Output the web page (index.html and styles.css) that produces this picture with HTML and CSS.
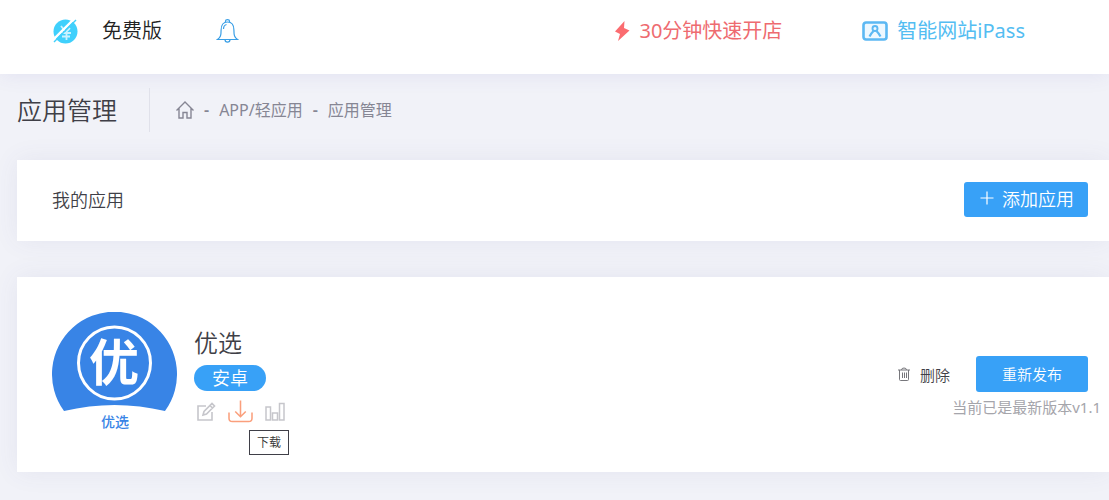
FILE: index.html
```html
<!DOCTYPE html>
<html lang="zh-CN">
<head>
    <meta charset="UTF-8">
    <meta name="viewport" content="width=device-width, initial-scale=1.0">
    <title>应用管理</title>
    <link rel="stylesheet" href="styles.css">
</head>
<body>
    <header class="topbar">
        <a class="plan" href="#">
            <svg class="plan-icon" viewBox="0 0 25 25" aria-hidden="true">
                <circle cx="12.500" cy="12.500" r="12" fill="#3fd0fc"/>
                <path d="M8 7l4 5M17 9l-4 4M9 14h9M9 17.500h8M13.500 13v8" fill="none" stroke="#c9f2ff" stroke-width="1.800"/>
                <path d="M0 21L21 0" stroke="#fff" stroke-width="2.400"/>
                <path d="M1 23L23 1" stroke="#3fd0fc" stroke-width="1.500"/>
            </svg>
            <span>免费版</span>
        </a>
        <a class="bell" href="#" aria-label="消息">
            <svg viewBox="0 0 22 24" fill="none" stroke="#3a9fe6" stroke-width="1.200" aria-hidden="true">
                <path d="M9 3V2q0-1.400 2-1.400T13 2v1M1 20.500c3-2 3.600-4 3.600-9.500C4.600 6 7 3 11 3s6.400 3 6.400 8c0 5.500.6 7.500 3.600 9.500zM8.500 20.500c0 3.500 5 3.500 5 0M7 10c0-2.500 1-4 3-4.500"/>
            </svg>
        </a>
        <nav class="top-links">
            <a class="quick" href="#">
                <svg class="bolt" viewBox="0 0 16 20" aria-hidden="true"><path d="M10.500 0L1 10.500l5 2.500-2 7L15.500 9.500 10 7z" fill="#fb6c70"/></svg>
                <span>30分钟快速开店</span>
            </a>
            <a class="ipass" href="#">
                <svg class="pass-icon" viewBox="0 0 26 20" fill="none" stroke="#5cb8f3" aria-hidden="true">
                    <rect x="1.500" y="1.500" width="23" height="17" rx="2.500" fill="#eef8ff" stroke-width="2.600"/>
                    <circle cx="13" cy="7.500" r="2.500" stroke-width="1.900"/>
                    <path d="M7.500 15.500c1-2 2-3.500 4-5.500M18.500 15.500c-1-2-2-3.500-4-5.500" stroke-width="2.200"/>
                </svg>
                <span>智能网站iPass</span>
            </a>
        </nav>
    </header>
    <main>
        <div class="page-head">
            <h1>应用管理</h1>
            <nav class="crumbs">
                <a href="#" aria-label="首页">
                    <svg class="home" viewBox="0 0 18 18" fill="none" stroke="#868694" stroke-width="1.400" aria-hidden="true">
                        <path d="M.5 9.500L9 1l8.500 8.500M3 7.500V17h4v-5.500h4V17h4V7.500"/>
                    </svg>
                </a>
                <span class="sep">-</span>
                <a href="#">APP/轻应用</a>
                <span class="sep">-</span>
                <span>应用管理</span>
            </nav>
        </div>
        <section class="card my-apps">
            <h2>我的应用</h2>
            <button class="btn btn-add" type="button">
                <svg class="plus" viewBox="0 0 14 14" aria-hidden="true"><path d="M7 .5v13M.5 7h13" stroke="#fff" stroke-width="1.200"/></svg>
                <span>添加应用</span>
            </button>
        </section>
        <section class="card app">
            <svg class="app-logo" viewBox="0 0 125 125" aria-hidden="true">
                <path d="M12 99A62.500 62.500 0 1 1 113 99Q62.500 87 12 99z" fill="#3884e6"/>
                <circle cx="62.500" cy="51" r="36" fill="none" stroke="#fff" stroke-width="3"/>
                <text class="logo-char" x="62" y="69">优</text>
                <text class="logo-name" x="63" y="115">优选</text>
            </svg>
            <div class="app-info">
                <h3>优选</h3>
                <span class="badge">安卓</span>
                <div class="tools">
                    <button type="button" aria-label="编辑">
                        <svg class="edit" viewBox="0 0 20 20" fill="none" stroke="#c6c6cb" stroke-width="1.600" aria-hidden="true">
                            <path d="M10 4H2v14h14v-8M7 13l1-3.500 8-8 2.500 2.500-8 8zM14 3.500L16.500 6"/>
                        </svg>
                    </button>
                    <button class="tool-download" type="button" aria-label="下载">
                        <svg class="download" viewBox="0 0 26 24" fill="none" stroke="#fa9f7c" stroke-width="1.600" aria-hidden="true">
                            <path d="M1 13v6q0 3.500 3.500 3.500h17q3.500 0 3.500-3.500v-6M13 .5V17M7.500 12l5.500 5.500 5.500-5.500"/>
                        </svg>
                        <span class="tip">下载</span>
                    </button>
                    <button type="button" aria-label="统计">
                        <svg class="chart" viewBox="0 0 20 20" fill="none" stroke="#c6c6cb" stroke-width="1.500" aria-hidden="true">
                            <path d="M1 5h4.500v13H1zM7.500 11h5v7h-5zM14.500 1.500H19V18h-4.500z"/>
                        </svg>
                    </button>
                </div>
            </div>
            <div class="app-actions">
                <div class="action-row">
                    <button class="btn-delete" type="button">
                        <svg class="trash" viewBox="0 0 12 14" fill="none" stroke="#77777c" aria-hidden="true">
                            <path d="M0 3h12M3.500 3q0-2 2.500-2t2.500 2M1.500 3v9.500q0 1 1 1h7q1 0 1-1V3M4.500 5.500V11M6.500 5.500V11M8.500 5.500V11"/>
                        </svg>
                        <span>删除</span>
                    </button>
                    <button class="btn btn-publish" type="button">重新发布</button>
                </div>
                <p class="version">当前已是最新版本v1.1</p>
            </div>
        </section>
    </main>
</body>
</html>
```
FILE: styles.css
```css
* { margin: 0; padding: 0; box-sizing: border-box; }
body { font-family: "Noto Sans", "Noto Sans CJK SC", sans-serif; font-weight: 350; background: #f1f2f8; color: #3f3f47; min-height: 100vh; }
a { color: inherit; text-decoration: none; }
button { font: inherit; color: inherit; border: none; background: none; cursor: pointer; }
svg { display: block; }
h1, h2, h3 { font-weight: 350; }

.topbar { display: flex; align-items: center; height: 74px; padding: 0 84px 12px 53px; background: #fff; box-shadow: 0 0 20px rgba(76, 72, 180, 0.1); font-size: 20px; line-height: 28px; }
.plan, .quick, .ipass { display: flex; align-items: center; }
.plan { gap: 24px; color: #222; }
.plan-icon { width: 25px; height: 25px; }
.bell { margin-left: 54px; }
.bell svg { width: 23px; height: 24px; }
.top-links { display: flex; gap: 80px; margin-left: auto; font-weight: 400; }
.quick { gap: 9px; color: #ee6b70; }
.bolt { width: 16px; height: 20px; }
.ipass { gap: 9px; color: #53bdf2; }
.pass-icon { width: 26px; height: 20px; }

main { padding-left: 17px; }
.page-head { display: flex; align-items: center; height: 44px; margin: 14px 0 28px; }
.page-head h1 { font-size: 25px; line-height: 44px; padding-right: 32px; border-right: 1px solid #e0e1ea; }
.crumbs { display: flex; align-items: center; gap: 10px; margin-left: 26px; font-size: 16px; font-weight: 400; line-height: 24px; color: #868694; }
.home { width: 18px; height: 18px; }
.sep { font-weight: 600; }

.card { background: #fff; box-shadow: 0 0 24px rgba(76, 72, 140, 0.08); display: flex; margin-bottom: 36px; }
.my-apps { align-items: center; justify-content: space-between; padding: 22px 21px 24px 35px; }
.my-apps h2 { font-size: 18px; line-height: 28px; }

.btn { background: #38a1f7; color: #fff; border-radius: 3px; }
.btn-add { display: flex; align-items: center; gap: 8px; height: 35px; padding: 0 14px 3px 16px; font-size: 18px; }
.plus { width: 14px; height: 14px; }

.app { padding: 35px 8px 35px 35px; }
.app-logo { width: 125px; height: 125px; flex-shrink: 0; }
.logo-char, .logo-name { font-family: "Noto Sans CJK SC", sans-serif; font-weight: 500; text-anchor: middle; }
.logo-char { font-size: 50px; font-weight: 700; fill: #fff; }
.logo-name { font-size: 14px; fill: #3884e6; }

.app-info { margin-left: 17px; padding-top: 14px; }
.app-info h3 { font-size: 24px; line-height: 34px; margin-bottom: 5px; }
.badge { display: block; width: fit-content; padding: 0 18px; border-radius: 13px; background: #38a1f7; color: #fff; font-size: 18px; line-height: 26px; }
.tools { display: flex; align-items: center; gap: 12px; margin: 9px 0 0 2px; }
.edit, .chart { width: 20px; height: 20px; }
.download { width: 25px; height: 23px; }
.tool-download { position: relative; }
.tip { position: absolute; top: 30px; left: 21px; padding: 0 7px; border: 1px solid #3f3f47; background: #fff; color: #333; font-size: 12px; line-height: 23px; white-space: nowrap; }

.app-actions { display: flex; flex-direction: column; align-items: flex-end; margin-left: auto; padding-top: 44px; font-size: 15px; }
.action-row { display: flex; align-items: center; gap: 26px; margin-right: 13px; }
.btn-delete { display: flex; align-items: center; gap: 10px; }
.trash { width: 12px; height: 14px; }
.btn-publish { height: 36px; padding: 0 26px 2px; }
.version { margin-top: 3px; font-weight: 400; line-height: 24px; color: #a5a5ab; }
```
